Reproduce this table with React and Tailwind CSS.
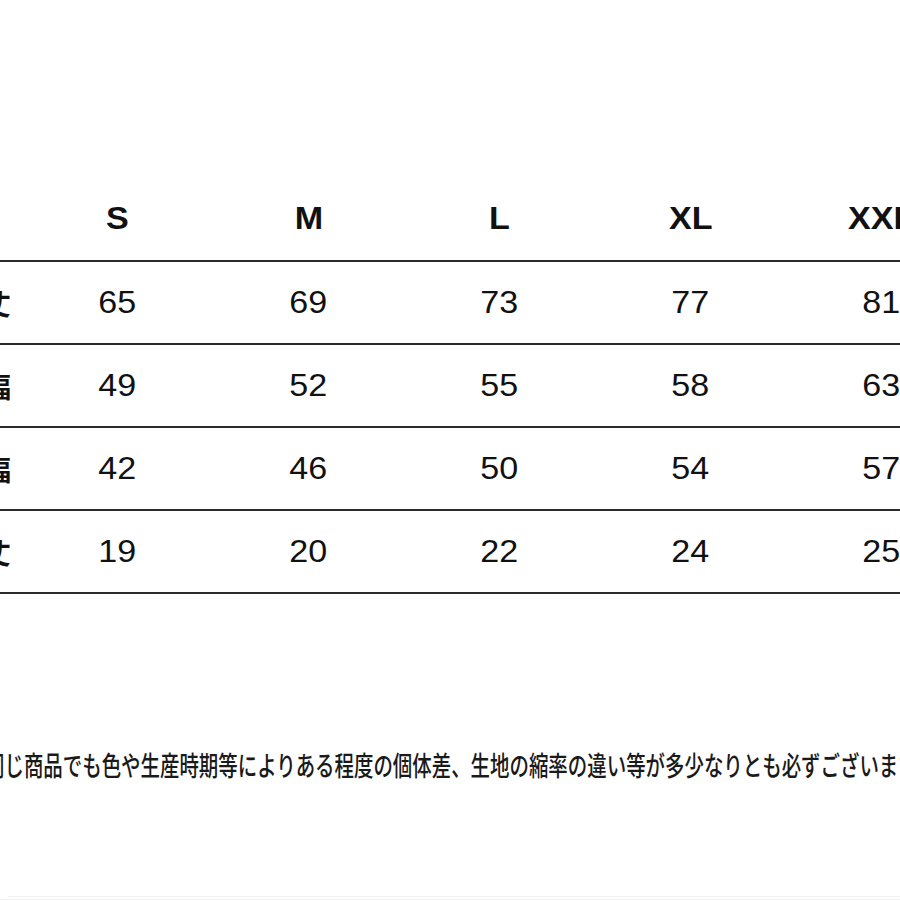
import React from 'react';

const SIZES = ['S', 'M', 'L', 'XL', 'XXL'];

const ROWS = [
  { label: '着丈', values: [65, 69, 73, 77, 81] },
  { label: '身幅', values: [49, 52, 55, 58, 63] },
  { label: '肩幅', values: [42, 46, 50, 54, 57] },
  { label: '袖丈', values: [19, 20, 22, 24, 25] },
];

const NOTE = '同じ商品でも色や生産時期等によりある程度の個体差、生地の縮率の違い等が多少なりとも必ずございます。';

const latin = { fontFamily: '"Liberation Sans", Arial, sans-serif' };
const jp = { fontFamily: '"Noto Sans CJK JP", "Noto Sans", sans-serif' };

const App = () => {
  return (
    <div className="w-[900px] h-[900px] bg-white overflow-hidden flex flex-col text-[#111]">
      {/* size table */}
      <div className="pt-[176px]">
        <div className="grid grid-cols-[22px_repeat(5,191px)] w-[977px] h-[86px] border-b-2 border-[#2a2a2a] items-center">
          <div />
          {SIZES.map(s => (
            <div key={s} className="flex justify-center">
              <span className="inline-block text-[31px] font-bold leading-none scale-x-110" style={latin}>{s}</span>
            </div>
          ))}
        </div>

        {ROWS.map(row => (
          <div key={row.label} className="grid grid-cols-[22px_repeat(5,191px)] w-[977px] h-[83px] border-b-2 border-[#2a2a2a] items-center">
            <div className="flex justify-end pr-[11px] whitespace-nowrap">
              <span className="text-[28px] font-bold leading-none" style={jp}>{row.label}</span>
            </div>
            {row.values.map((v, i) => (
              <div key={i} className="flex justify-center">
                <span className="inline-block text-[31px] leading-none scale-x-110" style={latin}>{v}</span>
              </div>
            ))}
          </div>
        ))}
      </div>

      {/* note */}
      <div className="mt-[157px] ml-[-15px] whitespace-nowrap">
        <span className="inline-block text-[27px] font-medium leading-none text-[#1a1a1a] scale-x-[0.72] origin-left" style={jp}>{NOTE}</span>
      </div>

      {/* faint bottom edge */}
      <div className="mt-auto">
        <div className="ml-[8px] h-px bg-[#f1f1f1]" />
        <div className="mt-[2px] h-px bg-[#eeeeee]" />
      </div>
    </div>
  );
};

export default App;
